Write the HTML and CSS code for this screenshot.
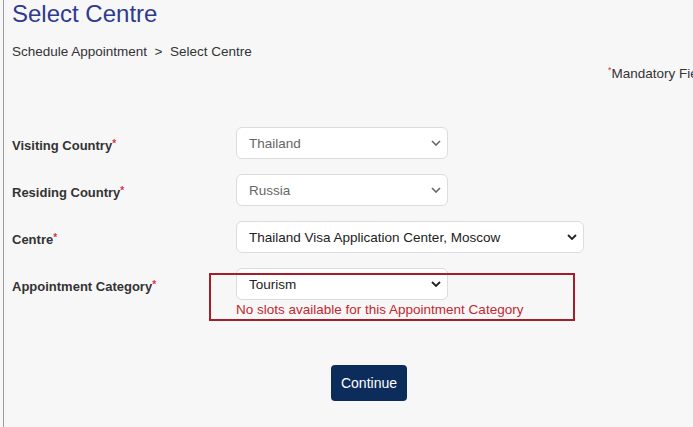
FILE: index.html
```html
<!DOCTYPE html>
<html>
<head>
    <title>Select Centre</title>
    <link rel="stylesheet" href="styles.css">
</head>
<body>
    <div class="page">
        <h1 class="title">Select Centre</h1>
        <div class="crumbs">Schedule Appointment &nbsp;&gt;&nbsp; Select Centre</div>
        <div class="mandatory"><sup class="req">*</sup>Mandatory Fields</div>

        <form class="form">
            <div class="row">
                <label class="label">Visiting Country<sup class="req">*</sup></label>
                <div class="field">
                    <span class="select-wrap">
                        <select class="select muted" disabled><option>Thailand</option></select>
                        <svg class="chev" width="10" height="6" viewBox="0 0 10 6"><path d="M1 1l4 4 4-4" fill="none" stroke="#666" stroke-width="1.6"/></svg>
                    </span>
                </div>
            </div>
            <div class="row">
                <label class="label">Residing Country<sup class="req">*</sup></label>
                <div class="field">
                    <span class="select-wrap">
                        <select class="select muted" disabled><option>Russia</option></select>
                        <svg class="chev" width="10" height="6" viewBox="0 0 10 6"><path d="M1 1l4 4 4-4" fill="none" stroke="#666" stroke-width="1.6"/></svg>
                    </span>
                </div>
            </div>
            <div class="row">
                <label class="label">Centre<sup class="req">*</sup></label>
                <div class="field">
                    <span class="select-wrap wide">
                        <select class="select"><option>Thailand Visa Application Center, Moscow</option></select>
                        <svg class="chev" width="10" height="6" viewBox="0 0 10 6"><path d="M1 1l4 4 4-4" fill="none" stroke="#222" stroke-width="1.8"/></svg>
                    </span>
                </div>
            </div>
            <div class="row">
                <label class="label">Appointment Category<sup class="req">*</sup></label>
                <div class="field">
                    <span class="select-wrap">
                        <select class="select"><option>Tourism</option></select>
                        <svg class="chev" width="10" height="6" viewBox="0 0 10 6"><path d="M1 1l4 4 4-4" fill="none" stroke="#222" stroke-width="1.8"/></svg>
                    </span>
                    <div class="error">No slots available for this Appointment Category</div>
                    <div class="highlight"></div>
                </div>
            </div>

            <div class="actions">
                <button type="button" class="btn">Continue</button>
            </div>
        </form>
    </div>
</body>
</html>
```

FILE: styles.css
```css
html, body {
    margin: 0;
    height: 100%;
    overflow: hidden;
}

body {
    font-family: "Liberation Sans", Arial, sans-serif;
    background-color: #f8f7f8;
    color: #333;
}

.page {
    margin-left: 3px;
    border-left: 1px solid #9a9a9a;
    padding: 0 10px 0 8px;
    width: 714px;
    min-height: 100%;
}

.title {
    margin: 0;
    padding-top: 1px;
    font-size: 24px;
    font-weight: normal;
    color: #2e3a8f;
    line-height: 26px;
}

.crumbs {
    margin-top: 17px;
    font-size: 13.5px;
    line-height: 16px;
    color: #333;
}

.mandatory {
    margin-top: 6px;
    padding-left: 596px;
    white-space: nowrap;
    font-size: 13.5px;
    line-height: 16px;
    color: #333;
}

.req {
    color: #e0313b;
    font-size: 9px;
    line-height: 0;
    vertical-align: 5px;
}

.label .req {
    font-size: 10px;
    vertical-align: 3px;
}

.form {
    margin-top: 45px;
}

.row {
    display: grid;
    grid-template-columns: 224px 1fr;
    align-items: start;
    margin-bottom: 15px;
}

.field {
    position: relative;
}

.label {
    padding-top: 6px;
    font-size: 13px;
    font-weight: bold;
    line-height: 26px;
    color: #333;
}

.select-wrap {
    position: relative;
    display: inline-block;
    vertical-align: top;
    width: 212px;
}

.select-wrap.wide {
    width: 348px;
}

.select {
    appearance: none;
    -webkit-appearance: none;
    width: 100%;
    height: 32px;
    padding: 0 24px 0 12px;
    border: 1px solid #dcdcdc;
    border-radius: 6px;
    background-color: #fff;
    font-family: "Liberation Sans", Arial, sans-serif;
    font-size: 13.5px;
    color: #222;
    display: block;
    opacity: 1;
}

.select.muted {
    color: #666;
}

.chev {
    position: absolute;
    right: 7px;
    top: 13px;
    pointer-events: none;
}

.error {
    margin-top: 2px;
    font-size: 13.5px;
    line-height: 16px;
    color: #c4262e;
}

.highlight {
    position: absolute;
    left: -27px;
    top: 5px;
    width: 362px;
    height: 44px;
    border: 2px solid #a3202a;
    pointer-events: none;
}

.actions {
    display: flex;
    justify-content: center;
    margin-top: 47px;
}

.btn {
    height: 36px;
    padding: 0 10px;
    border: none;
    border-radius: 4px;
    background-color: #0c2d5b;
    color: #fff;
    font-family: "Liberation Sans", Arial, sans-serif;
    font-size: 14px;
    cursor: pointer;
}
```
